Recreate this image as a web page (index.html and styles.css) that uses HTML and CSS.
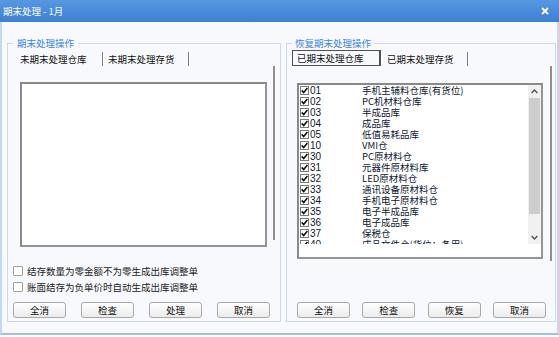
FILE: index.html
```html
<!DOCTYPE html>
<html lang="zh-CN">
<head>
<meta charset="utf-8">
<title>期末处理 - 1月</title>
<link rel="stylesheet" href="styles.css">
</head>
<body>
<div class="window">
  <div class="titlebar">
    <span class="title">期末处理 - 1月</span>
    <svg class="close" width="8" height="8" viewBox="0 0 8 8"><path d="M1 1L7 7M7 1L1 7" stroke="#fff" stroke-width="1.8" fill="none"/></svg>
  </div>
  <div class="content">
    <fieldset class="group group-left">
      <legend>期末处理操作</legend>
      <div class="group-body">
        <div class="tabs">
          <div class="tab tab-first">未期末处理仓库</div>
          <div class="tab tab-second">未期末处理存货</div>
        </div>
        <div class="page page-left">
          <div class="listbox listbox-left"></div>
        </div>
        <div class="options">
          <div class="opt"><span class="cb"></span>结存数量为零金额不为零生成出库调整单</div>
          <div class="opt"><span class="cb"></span>账面结存为负单价时自动生成出库调整单</div>
        </div>
        <div class="buttons">
          <button class="btn">全消</button>
          <button class="btn">检查</button>
          <button class="btn">处理</button>
          <button class="btn">取消</button>
        </div>
      </div>
    </fieldset>
    <fieldset class="group group-right">
      <legend>恢复期末处理操作</legend>
      <div class="group-body">
        <div class="tabs">
          <div class="tab tab-first tab-focus">已期末处理仓库</div>
          <div class="tab tab-second">已期末处理存货</div>
        </div>
        <div class="page page-right">
          <div class="listbox listbox-right">
            <div class="list-view">
              <div class="rows">
                <div class="row"><span class="chk"><svg width="7" height="7" viewBox="0 0 7 7"><path d="M0.7 3.4L2.7 5.6L6.4 1" stroke="#111" stroke-width="1.6" fill="none"/></svg></span><span class="code">01</span><span class="name">手机主辅料仓库(有货位)</span></div>
                <div class="row"><span class="chk"><svg width="7" height="7" viewBox="0 0 7 7"><path d="M0.7 3.4L2.7 5.6L6.4 1" stroke="#111" stroke-width="1.6" fill="none"/></svg></span><span class="code">02</span><span class="name">PC机材料仓库</span></div>
                <div class="row"><span class="chk"><svg width="7" height="7" viewBox="0 0 7 7"><path d="M0.7 3.4L2.7 5.6L6.4 1" stroke="#111" stroke-width="1.6" fill="none"/></svg></span><span class="code">03</span><span class="name">半成品库</span></div>
                <div class="row"><span class="chk"><svg width="7" height="7" viewBox="0 0 7 7"><path d="M0.7 3.4L2.7 5.6L6.4 1" stroke="#111" stroke-width="1.6" fill="none"/></svg></span><span class="code">04</span><span class="name">成品库</span></div>
                <div class="row"><span class="chk"><svg width="7" height="7" viewBox="0 0 7 7"><path d="M0.7 3.4L2.7 5.6L6.4 1" stroke="#111" stroke-width="1.6" fill="none"/></svg></span><span class="code">05</span><span class="name">低值易耗品库</span></div>
                <div class="row"><span class="chk"><svg width="7" height="7" viewBox="0 0 7 7"><path d="M0.7 3.4L2.7 5.6L6.4 1" stroke="#111" stroke-width="1.6" fill="none"/></svg></span><span class="code">10</span><span class="name">VMI仓</span></div>
                <div class="row"><span class="chk"><svg width="7" height="7" viewBox="0 0 7 7"><path d="M0.7 3.4L2.7 5.6L6.4 1" stroke="#111" stroke-width="1.6" fill="none"/></svg></span><span class="code">30</span><span class="name">PC原材料仓</span></div>
                <div class="row"><span class="chk"><svg width="7" height="7" viewBox="0 0 7 7"><path d="M0.7 3.4L2.7 5.6L6.4 1" stroke="#111" stroke-width="1.6" fill="none"/></svg></span><span class="code">31</span><span class="name">元器件原材料库</span></div>
                <div class="row"><span class="chk"><svg width="7" height="7" viewBox="0 0 7 7"><path d="M0.7 3.4L2.7 5.6L6.4 1" stroke="#111" stroke-width="1.6" fill="none"/></svg></span><span class="code">32</span><span class="name">LED原材料仓</span></div>
                <div class="row"><span class="chk"><svg width="7" height="7" viewBox="0 0 7 7"><path d="M0.7 3.4L2.7 5.6L6.4 1" stroke="#111" stroke-width="1.6" fill="none"/></svg></span><span class="code">33</span><span class="name">通讯设备原材料仓</span></div>
                <div class="row"><span class="chk"><svg width="7" height="7" viewBox="0 0 7 7"><path d="M0.7 3.4L2.7 5.6L6.4 1" stroke="#111" stroke-width="1.6" fill="none"/></svg></span><span class="code">34</span><span class="name">手机电子原材料仓</span></div>
                <div class="row"><span class="chk"><svg width="7" height="7" viewBox="0 0 7 7"><path d="M0.7 3.4L2.7 5.6L6.4 1" stroke="#111" stroke-width="1.6" fill="none"/></svg></span><span class="code">35</span><span class="name">电子半成品库</span></div>
                <div class="row"><span class="chk"><svg width="7" height="7" viewBox="0 0 7 7"><path d="M0.7 3.4L2.7 5.6L6.4 1" stroke="#111" stroke-width="1.6" fill="none"/></svg></span><span class="code">36</span><span class="name">电子成品库</span></div>
                <div class="row"><span class="chk"><svg width="7" height="7" viewBox="0 0 7 7"><path d="M0.7 3.4L2.7 5.6L6.4 1" stroke="#111" stroke-width="1.6" fill="none"/></svg></span><span class="code">37</span><span class="name">保税仓</span></div>
                <div class="row"><span class="chk"><svg width="7" height="7" viewBox="0 0 7 7"><path d="M0.7 3.4L2.7 5.6L6.4 1" stroke="#111" stroke-width="1.6" fill="none"/></svg></span><span class="code">40</span><span class="name">成品文件仓(货位：备用)</span></div>
              </div>
              <div class="sb">
                <div class="sb-btn"><svg width="7" height="5" viewBox="0 0 7 5"><path d="M0.6 4L3.5 1L6.4 4" stroke="#555" stroke-width="1.4" fill="none"/></svg></div>
                <div class="sb-thumb"></div>
                <div class="sb-track"></div>
                <div class="sb-btn"><svg width="7" height="5" viewBox="0 0 7 5"><path d="M0.6 1L3.5 4L6.4 1" stroke="#555" stroke-width="1.4" fill="none"/></svg></div>
              </div>
            </div>
          </div>
        </div>
        <div class="buttons">
          <button class="btn">全消</button>
          <button class="btn">检查</button>
          <button class="btn">恢复</button>
          <button class="btn">取消</button>
        </div>
      </div>
    </fieldset>
  </div>
</div>
</body>
</html>
```
FILE: styles.css
```css
* { box-sizing: border-box; }
html, body { margin: 0; padding: 0; }
body {
  width: 559px;
  height: 337px;
  overflow: hidden;
  background: #ffffff;
  font-family: "Noto Sans CJK SC", "Liberation Sans", sans-serif;
  font-size: 9.5px;
  color: #111;
}
.window {
  width: 559px;
  height: 335px;
  display: flex;
  flex-direction: column;
}
.titlebar {
  height: 22px;
  flex: none;
  display: flex;
  align-items: center;
  justify-content: space-between;
  padding: 0 10px 0 3px;
  background: linear-gradient(#5898e2, #3c80d4);
  color: #fff;
  line-height: 12px;
}
.title { font-size: 9.5px; }
.close { display: block; }
.content {
  flex: 1;
  display: flex;
  align-items: flex-start;
  gap: 5px;
  padding: 15px 1px 0 5px;
  background: #f7f9fd;
  border-left: 2px solid #c3d9f3;
  border-right: 2px solid #c3d9f3;
  border-bottom: 2px solid #9dc1ec;
}
.group {
  margin: 0;
  min-width: 0;
  border: 1px solid #cdd8e8;
  padding: 1px 5px 3px 5px;
}
.group-left { width: 274px; }
.group-right { width: 270px; padding-right: 3px; }
.group legend {
  padding: 0 4px;
  font-size: 9.5px;
  line-height: 12px;
  color: #3a84e6;
}
.group-right legend { padding: 0 3px; }
.group-body {
  height: 268px;
  display: flex;
  flex-direction: column;
}
.tabs {
  height: 16px;
  display: flex;
  align-items: flex-end;
  flex: none;
}
.tab {
  height: 14px;
  line-height: 14px;
  border-right: 1px solid #7d7d7d;
  box-shadow: 1px 0 0 #ffffff;
  white-space: nowrap;
}
.tab-first { width: 90px; padding-left: 7px; }
.tab-second { width: 86px; padding-left: 5px; }
.group-right .tab-first { width: 89px; }
.group-right .tab-second { width: 87px; padding-left: 6px; }
.tab-focus {
  height: 16px;
  line-height: 14px;
  padding-left: 4px;
  border: 1px solid #505050;
  border-right-width: 2px;
  margin-bottom: 0;
}
.page {
  flex: none;
  border-right: 2px solid #8f8f8f;
}
.page-left { height: 174px; padding: 16px 0 0 7px; }
.page-right { height: 195px; padding: 17px 0 0 5px; }
.listbox {
  background: #fff;
  border: 2px solid #959595;
  border-top-color: #898989;
  border-left-color: #898989;
}
.listbox-left { width: 247px; height: 165px; }
.listbox-right { width: 246px; height: 176px; }
.list-view {
  height: 159px;
  display: flex;
}
.rows {
  flex: 1;
  overflow: hidden;
  color: #0f1830;
}
.row {
  height: 11px;
  display: flex;
  align-items: center;
  padding-left: 1px;
  line-height: 11px;
  white-space: nowrap;
}
.chk {
  width: 9px;
  height: 9px;
  flex: none;
  border: 1px solid #7a7a7a;
  background: #fff;
  display: flex;
  align-items: center;
  justify-content: center;
}
.chk svg { display: block; }
.code {
  width: 52px;
  margin-left: 1px;
  font-family: "Liberation Sans", "Noto Sans CJK SC", sans-serif;
  font-size: 10px;
}
.sb {
  width: 13px;
  flex: none;
  display: flex;
  flex-direction: column;
  background: #f1f1f1;
}
.sb-btn {
  height: 13px;
  flex: none;
  display: flex;
  align-items: center;
  justify-content: center;
}
.sb-btn svg { display: block; }
.sb-thumb {
  height: 116px;
  flex: none;
  margin: 0 1px;
  background: #cdcdcd;
}
.sb-track { flex: 1; }
.options {
  margin-top: 23px;
  display: flex;
  flex-direction: column;
}
.opt {
  height: 16px;
  display: flex;
  align-items: center;
  white-space: nowrap;
  color: #222;
}
.cb {
  width: 10px;
  height: 10px;
  margin-right: 4px;
  border: 1px solid #a3a3a3;
  border-radius: 1px;
  background: #fff;
  flex: none;
}
.buttons {
  margin-top: auto;
  height: 16px;
  display: flex;
  justify-content: space-between;
  flex: none;
}
.group-left .buttons { padding-right: 5px; }
.group-right .buttons { padding: 0 6px 0 5px; }
.btn {
  width: 53px;
  height: 16px;
  padding: 0;
  margin: 0;
  font-family: "Noto Sans CJK SC", sans-serif;
  font-size: 9.5px;
  line-height: 14px;
  color: #111;
  border: 1px solid #a8a8a8;
  border-radius: 3px;
  background: linear-gradient(#fefefe, #ececec);
}
```
